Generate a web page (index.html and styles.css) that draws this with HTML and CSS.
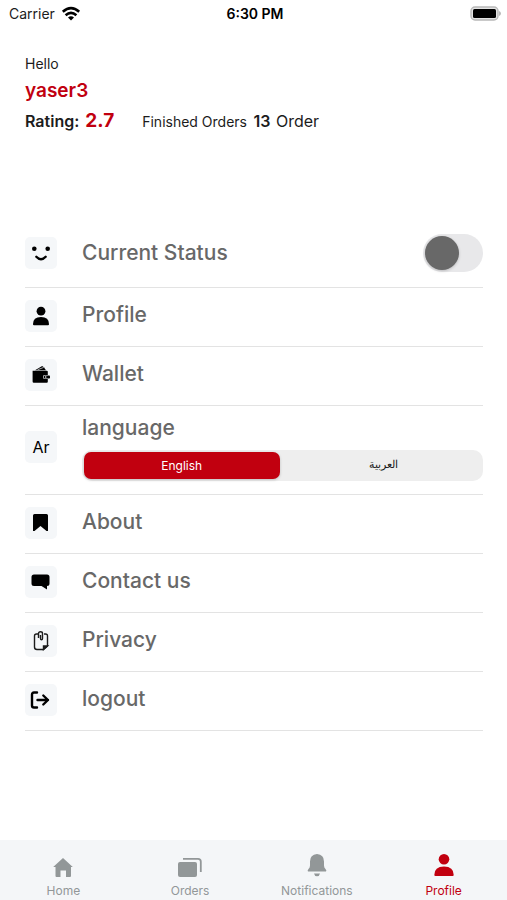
FILE: index.html
```html
<!DOCTYPE html>
<html lang="en">
<head>
    <meta charset="UTF-8">
    <meta name="viewport" content="width=device-width, initial-scale=1.0">
    <title>Profile</title>
    <link rel="stylesheet" href="styles.css">
</head>
<body>
    <div class="status-bar">
        <div class="carrier">
            <span>Carrier</span>
            <svg width="18" height="14" viewBox="0 0 18 14" fill="none" stroke="#000" stroke-width="2.6">
                <path d="M.8 4.800Q9-2.400 17.200 4.800"/>
                <path d="M3.600 8.200Q9 3.400 14.400 8.200"/>
                <path d="M6 10.400Q9 8 12 10.400L9 13.400z" fill="#000" stroke="none"/>
            </svg>
        </div>
        <div class="time">6:30 PM</div>
        <svg class="battery" width="31" height="15" viewBox="0 0 31 15">
            <rect x="1" y="1" width="27" height="13" rx="4" fill="#e4e4e4" stroke="#b8b8b8" stroke-width="1.4"/>
            <rect x="3" y="3" width="23" height="9" rx="1.500" fill="#000"/>
            <path d="M29 5q2 .8 2 2.500t-2 2.500z" fill="#b8b8b8"/>
        </svg>
    </div>

    <header class="user">
        <div class="hello">Hello</div>
        <h1>yaser3</h1>
        <div class="stats">
            <div class="rating">Rating: <b>2.7</b></div>
            <div class="orders"><span>Finished Orders</span> <b>13</b> Order</div>
        </div>
    </header>

    <main class="menu">
        <div class="item status">
            <span class="icon">
                <svg width="20" height="20" viewBox="0 0 20 20">
                    <circle cx="3.300" cy="5.700" r="2.300"/>
                    <circle cx="16.700" cy="5.700" r="2.300"/>
                    <path d="M5.300 13.800Q10 18.800 14.700 13.800" fill="none" stroke="#000" stroke-width="2.400" stroke-linecap="round"/>
                </svg>
            </span>
            <label class="title" for="status">Current Status</label>
            <input type="checkbox" id="status" class="switch">
        </div>

        <a href="#profile" class="item">
            <span class="icon">
                <svg width="20" height="20" viewBox="0 0 20 20">
                    <circle cx="10" cy="5.200" r="4.400"/>
                    <path d="M2 18.200q0-7.200 8-7.200t8 7.200q0 1-1 1H3q-1 0-1-1z"/>
                </svg>
            </span>
            <span class="title">Profile</span>
        </a>

        <a href="#wallet" class="item">
            <span class="icon">
                <svg width="20" height="20" viewBox="0 0 20 20">
                    <path d="M4 5.200L11.200 1l1.600 1.200L15 5.200z"/>
                    <path d="M6.500 4.800l6.200-2.400" fill="none" stroke="#f5f7f9" stroke-width=".7"/>
                    <path d="M1.600 5.800h14.200q1 0 1 1v3.100h-3.400q-1.400 0-1.400 2.100t1.400 2.100h3.400v2.700q0 1-1 1H2.800q-1.200 0-1.200-1.200z"/>
                    <path d="M13.600 10.500h4.600q.8 0 .8.8v1.400q0 .8-.8.8h-4.600q-1 0-1-1.500t1-1.500z"/>
                    <circle cx="14.700" cy="12" r=".8" fill="#f5f7f9"/>
                </svg>
            </span>
            <span class="title">Wallet</span>
        </a>

        <div class="item language">
            <span class="icon">Ar</span>
            <div class="choice">
                <div class="title" id="language">language</div>
                <div class="segments" role="radiogroup" aria-labelledby="language">
                    <label><input type="radio" name="language" value="en" checked><span>English</span></label>
                    <label><input type="radio" name="language" value="ar"><span lang="ar" dir="rtl">العربية</span></label>
                </div>
            </div>
        </div>

        <a href="#about" class="item">
            <span class="icon">
                <svg width="20" height="20" viewBox="0 0 20 20">
                    <path d="M3.500 1h12q1.500 0 1.500 1.500V18h-1.500l-6-5-6 5H2V2.500Q2 1 3.500 1z"/>
                </svg>
            </span>
            <span class="title">About</span>
        </a>

        <a href="#contact" class="item">
            <span class="icon">
                <svg width="20" height="20" viewBox="0 0 20 20">
                    <path d="M3 2.500h13q2.500 0 2.500 2.500v6.500q0 2.500-2.500 2.500v3.500L10.500 14H3Q.5 14 .5 11.500V5Q.5 2.500 3 2.500z"/>
                </svg>
            </span>
            <span class="title">Contact us</span>
        </a>

        <a href="#privacy" class="item">
            <span class="icon">
                <svg width="20" height="20" viewBox="0 0 20 20" fill="none" stroke="#1c1c1c" stroke-width="1.400">
                    <path d="M7 3H5.500Q3.500 3 3.500 5v11q0 2.500 2.500 2.500h6.500L16.500 15V5q0-2-2-2H13"/>
                    <path d="M7.500 7V2.500Q7.500.8 9.500.8t2 1.700v5q0 1.300-1 1.300t-1-1.300V4"/>
                    <path d="M12.500 18.500V15h4z" fill="#1c1c1c"/>
                </svg>
            </span>
            <span class="title">Privacy</span>
        </a>

        <a href="#logout" class="item">
            <span class="icon">
                <svg width="20" height="20" viewBox="0 0 20 20" fill="none" stroke="#000" stroke-width="2.400" stroke-linecap="round" stroke-linejoin="round">
                    <path d="M6 2.500H3q-2 0-2 2v11q0 2 2 2h3"/>
                    <path d="M6.500 10H17M12.300 5.500L17 10l-4.700 4.500"/>
                </svg>
            </span>
            <span class="title">logout</span>
        </a>
    </main>

    <nav class="tabs">
        <a href="#home">
            <svg width="24" height="24" viewBox="0 0 24 24">
                <path d="M12 3l9.800 9H20v9q0 1-1 1h-4v-6.500H9.500V22H5.500q-1 0-1-1v-9H2.200z"/>
            </svg>
            Home
        </a>
        <a href="#orders">
            <svg width="24" height="24" viewBox="0 0 24 24">
                <rect x="0" y="7" width="19" height="15" rx="2"/>
                <path d="M5 3.800h15q2.800 0 2.800 2.800V17" fill="none" stroke="#929798" stroke-width="1.800"/>
            </svg>
            Orders
        </a>
        <a href="#notifications">
            <svg width="24" height="24" viewBox="0 0 24 24">
                <path d="M12-1q7 .5 7 7.500v4q0 2 1.500 3.500t.5 2.500H3q-1-1 .5-2.500T5 10.500v-4Q5-.5 12-1z"/>
                <path d="M9 18.500h6q-.5 2.700-3 2.700t-3-2.700z"/>
            </svg>
            Notifications
        </a>
        <a href="#profile" class="active">
            <svg width="24" height="24" viewBox="0 0 24 24">
                <circle cx="12" cy="4.300" r="5.300"/>
                <path d="M2.300 20q0-8.500 9.700-8.500t9.700 8.500q0 1-1 1H3.300q-1 0-1-1z"/>
            </svg>
            Profile
        </a>
    </nav>
</body>
</html>
```

FILE: styles.css
```css
* {
    box-sizing: border-box;
}
body {
    margin: 0;
    min-height: 100vh;
    display: flex;
    flex-direction: column;
    font-family: Inter, "Liberation Sans", sans-serif;
    color: #1c1c1c;
    background: #fff;
}
a {
    color: inherit;
    text-decoration: none;
}
svg {
    display: block;
    overflow: visible;
}

.status-bar {
    display: grid;
    grid-template-columns: 1fr auto 1fr;
    align-items: center;
    height: 27px;
    padding: 0 6px 0 9px;
    font-size: 14px;
}
.carrier {
    display: flex;
    align-items: center;
    gap: 7px;
}
.time {
    font-weight: 600;
    color: #000;
}
.battery {
    justify-self: end;
}

.user {
    padding: 26px 24px 0 25px;
}
.hello {
    font-size: 14px;
    line-height: 22px;
}
h1 {
    margin: 0;
    font-size: 19px;
    line-height: 32px;
    font-weight: 600;
    color: #c1000f;
}
.stats {
    display: flex;
    align-items: baseline;
    gap: 28px;
    line-height: 28px;
    white-space: nowrap;
}
.rating {
    font-size: 16px;
    font-weight: 600;
}
.rating b {
    margin-left: 2px;
    font-size: 19px;
    font-weight: 700;
    color: #c1000f;
}
.orders {
    font-size: 16px;
}
.orders span {
    font-size: 14px;
}
.orders b {
    margin: 0 1px 0 2px;
    font-weight: 600;
}

.menu {
    flex: 1;
    margin: 86px 24px 24px 25px;
}
.item {
    display: flex;
    align-items: flex-start;
    padding: 12px 0 14px;
    border-bottom: 1px solid #e3e3e3;
}
.icon {
    flex: none;
    display: flex;
    align-items: center;
    justify-content: center;
    width: 32px;
    height: 32px;
    margin-right: 25px;
    border-radius: 5px;
    background: #f5f7f9;
    font-size: 16px;
    color: #000;
}
.title {
    font-size: 21px;
    line-height: 30px;
    font-weight: 500;
    color: #686868;
}

.status {
    align-items: center;
    padding-bottom: 15px;
}
.switch {
    appearance: none;
    width: 60px;
    height: 38px;
    margin: 0 0 0 auto;
    padding: 2px;
    border-radius: 19px;
    background: #e8e8ea;
}
.switch::before {
    content: "";
    display: block;
    width: 34px;
    height: 34px;
    border-radius: 50%;
    background: #686868;
    box-shadow: 0 1px 3px rgba(0, 0, 0, 0.2);
}
.switch:checked::before {
    margin-left: auto;
}

.language {
    align-items: center;
    padding: 7px 0 13px;
}
.choice {
    flex: 1;
}
.segments {
    display: flex;
    gap: 6px;
    margin-top: 7px;
    padding: 2px;
    border-radius: 10px;
    background: #eee;
}
.segments label {
    position: relative;
    flex: 1;
}
.segments input {
    position: absolute;
    inset: 0;
    margin: 0;
    opacity: 0;
}
.segments span {
    display: block;
    height: 27px;
    border-radius: 7px;
    font-size: 12px;
    line-height: 27px;
    text-align: center;
}
.segments span[lang="ar"] {
    font-size: 11px;
    line-height: 25px;
}
.segments input:checked + span {
    background: #c1000f;
    color: #fff;
    box-shadow: 0 1px 3px rgba(0, 0, 0, 0.2);
}

.tabs {
    display: flex;
    height: 60px;
    padding-top: 15px;
    background: #f4f6f8;
}
.tabs a {
    flex: 1;
    display: flex;
    flex-direction: column;
    align-items: center;
    gap: 4px;
    font-size: 12px;
    line-height: 16px;
    color: #929798;
}
.tabs svg {
    fill: currentColor;
}
.tabs .active {
    color: #c1000f;
}
```
